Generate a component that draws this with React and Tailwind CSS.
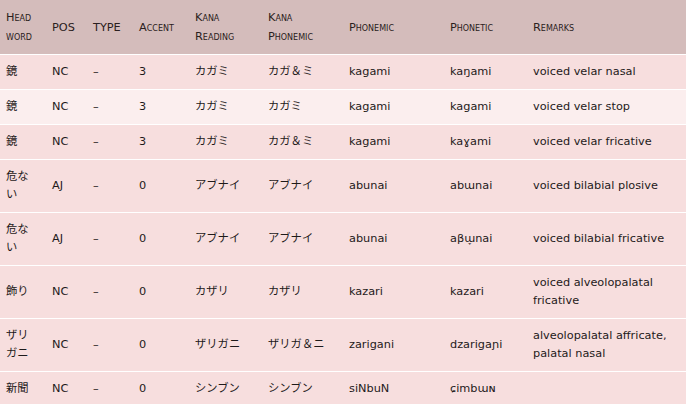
import React from "react";

const COLS = [
  { key: "head", label: "Head word", w: "w-[46px]" },
  { key: "pos", label: "POS", w: "w-[41px]" },
  { key: "type", label: "TYPE", w: "w-[46px]" },
  { key: "accent", label: "Accent", w: "w-[56px]" },
  { key: "kanaReading", label: "Kana Reading", w: "w-[73px]" },
  { key: "kanaPhonemic", label: "Kana Phonemic", w: "w-[81px]" },
  { key: "phonemic", label: "Phonemic", w: "w-[101px]" },
  { key: "phonetic", label: "Phonetic", w: "w-[83px]" },
  { key: "remarks", label: "Remarks", w: "w-auto" },
];

const ROWS = [
  { head: "鏡", pos: "NC", accent: "3", kanaReading: "カガミ", kanaPhonemic: "カガ＆ミ", phonemic: "kagami", phonetic: "kaŋami", remarks: "voiced velar nasal" },
  { head: "鏡", pos: "NC", accent: "3", kanaReading: "カガミ", kanaPhonemic: "カガミ", phonemic: "kagami", phonetic: "kagami", remarks: "voiced velar stop", light: true },
  { head: "鏡", pos: "NC", accent: "3", kanaReading: "カガミ", kanaPhonemic: "カガ＆ミ", phonemic: "kagami", phonetic: "kaɣami", remarks: "voiced velar fricative" },
  { head: "危ない", pos: "AJ", accent: "0", kanaReading: "アブナイ", kanaPhonemic: "アブナイ", phonemic: "abunai", phonetic: "abɯnai", remarks: "voiced bilabial plosive" },
  { head: "危ない", pos: "AJ", accent: "0", kanaReading: "アブナイ", kanaPhonemic: "アブナイ", phonemic: "abunai", phonetic: "aβɯ̞nai", remarks: "voiced bilabial fricative" },
  { head: "飾り", pos: "NC", accent: "0", kanaReading: "カザリ", kanaPhonemic: "カザリ", phonemic: "kazari", phonetic: "kazari", remarks: "voiced alveolopalatal fricative" },
  { head: "ザリガニ", pos: "NC", accent: "0", kanaReading: "ザリガニ", kanaPhonemic: "ザリガ＆ニ", phonemic: "zarigani", phonetic: "dzarigaɲi", remarks: "alveolopalatal affricate, palatal nasal" },
  { head: "新聞", pos: "NC", accent: "0", kanaReading: "シンブン", kanaPhonemic: "シンブン", phonemic: "siNbuN", phonetic: "ɕimbɯɴ", remarks: "" },
];

export default function App() {
  return (
    <div className="w-[686px] h-[404px] overflow-hidden bg-[#f7dede] font-['DejaVu_Sans','Noto_Sans_CJK_JP',sans-serif] text-[11.3px] text-[#1e1a1a]">
      <table className="w-full table-fixed border-collapse">
        <colgroup>
          {COLS.map(c => (
            <col key={c.key} className={c.w} />
          ))}
        </colgroup>
        <thead>
          <tr className="bg-[#d4bcbb] border-b border-white">
            {COLS.map(c => (
              <th
                key={c.key}
                className={`text-left align-middle font-normal [font-variant:small-caps] leading-[19px] py-[8px] pl-[6px] ${c.key === "head" ? "pr-[10px]" : "pr-[6px]"} text-[#2a2020]`}
              >
                {c.label}
              </th>
            ))}
          </tr>
        </thead>
        <tbody>
          {ROWS.map((r, i) => (
            <tr key={i} className={`${r.light ? "bg-[#fbeeee]" : "bg-[#f7dede]"} border-b border-white`}>
              {COLS.map(c => (
                <td
                  key={c.key}
                  className={`text-left align-middle leading-[18px] py-[8px] pl-[6px] ${c.key === "head" ? "pr-[10px]" : "pr-[6px]"}`}
                >
                  {c.key === "type" ? "–" : r[c.key]}
                </td>
              ))}
            </tr>
          ))}
        </tbody>
      </table>
    </div>
  );
}
